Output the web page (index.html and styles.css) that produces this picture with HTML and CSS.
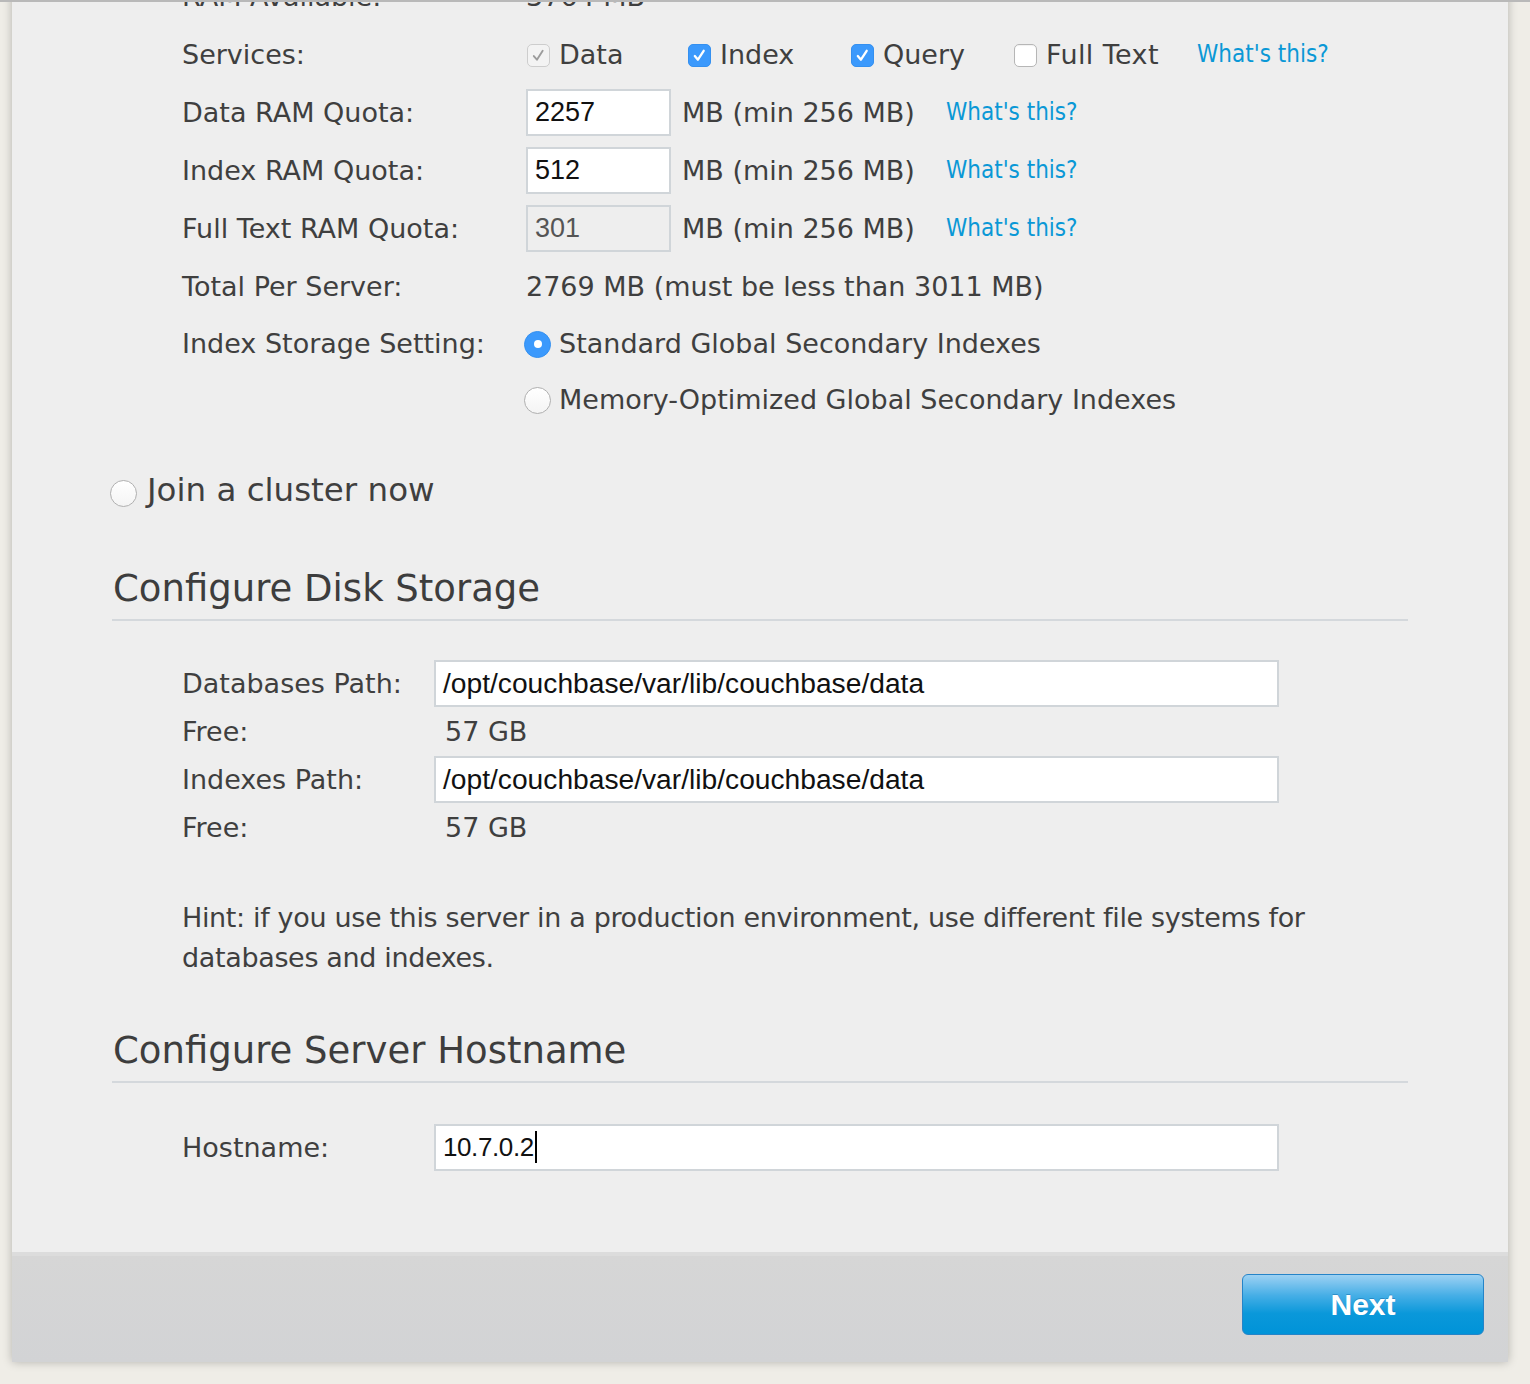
FILE: index.html
```html
<!DOCTYPE html>
<html>
<head>
<meta charset="utf-8">
<link rel="stylesheet" href="styles.css">
</head>
<body>
<div class="page">
  <div class="panel">
    <div class="content">
      <div class="setup">
        <div class="row">
          <div class="label">RAM Available:</div>
          <div class="value">3764 MB</div>
        </div>
        <div class="row">
          <div class="label">Services:</div>
          <div class="value services">
            <span class="svc svc-data"><span class="cb cb-disabled"><svg viewBox="0 0 22 22"><path d="M6.5 11.5 L9.5 15 L15 6.5" fill="none" stroke="#9c9c9c" stroke-width="1.8" stroke-linecap="round" stroke-linejoin="round"/></svg></span>Data</span>
            <span class="svc svc-index"><span class="cb cb-on"><svg viewBox="0 0 22 22"><path d="M6.5 11.5 L9.5 15 L15 6.5" fill="none" stroke="#fff" stroke-width="2.2" stroke-linecap="round" stroke-linejoin="round"/></svg></span>Index</span>
            <span class="svc svc-query"><span class="cb cb-on"><svg viewBox="0 0 22 22"><path d="M6.5 11.5 L9.5 15 L15 6.5" fill="none" stroke="#fff" stroke-width="2.2" stroke-linecap="round" stroke-linejoin="round"/></svg></span>Query</span>
            <span class="svc svc-fts"><span class="cb cb-off"></span>Full Text</span>
            <a class="help" href="#">What's this?</a>
          </div>
        </div>
        <div class="row">
          <div class="label">Data RAM Quota:</div>
          <div class="value">
            <div class="field small">2257</div>
            <span class="unit">MB (min 256 MB)</span>
            <a class="help" href="#">What's this?</a>
          </div>
        </div>
        <div class="row">
          <div class="label">Index RAM Quota:</div>
          <div class="value">
            <div class="field small">512</div>
            <span class="unit">MB (min 256 MB)</span>
            <a class="help" href="#">What's this?</a>
          </div>
        </div>
        <div class="row">
          <div class="label">Full Text RAM Quota:</div>
          <div class="value">
            <div class="field small disabled">301</div>
            <span class="unit">MB (min 256 MB)</span>
            <a class="help" href="#">What's this?</a>
          </div>
        </div>
        <div class="row">
          <div class="label">Total Per Server:</div>
          <div class="value">2769 MB (must be less than 3011 MB)</div>
        </div>
        <div class="row row-radio">
          <div class="label">Index Storage Setting:</div>
          <div class="value"><span class="radio radio-on"></span>Standard Global Secondary Indexes</div>
        </div>
        <div class="row row-radio">
          <div class="label"></div>
          <div class="value"><span class="radio"></span>Memory-Optimized Global Secondary Indexes</div>
        </div>
      </div>

      <div class="join"><span class="radio radio-lg"></span>Join a cluster now</div>

      <h2 class="section-title first">Configure Disk Storage</h2>
      <div class="disk">
        <div class="drow">
          <div class="dlabel">Databases Path:</div>
          <div class="field wide">/opt/couchbase/var/lib/couchbase/data</div>
        </div>
        <div class="drow">
          <div class="dlabel">Free:</div>
          <div class="dvalue">57 GB</div>
        </div>
        <div class="drow">
          <div class="dlabel">Indexes Path:</div>
          <div class="field wide">/opt/couchbase/var/lib/couchbase/data</div>
        </div>
        <div class="drow">
          <div class="dlabel">Free:</div>
          <div class="dvalue">57 GB</div>
        </div>
        <p class="hint">Hint: if you use this server in a production environment, use different file systems for databases and indexes.</p>
      </div>

      <h2 class="section-title second">Configure Server Hostname</h2>
      <div class="host">
        <div class="drow">
          <div class="dlabel">Hostname:</div>
          <div class="field wide hostname">10.7.0.2<span class="caret"></span></div>
        </div>
      </div>
    </div>
    <div class="footer">
      <button class="next">Next</button>
    </div>
  </div>
</div>
</body>
</html>
```
FILE: styles.css
```css
html, body {
  margin: 0;
  padding: 0;
}
body {
  background: #efede7;
  font-family: "DejaVu Sans", Verdana, sans-serif;
  color: #3f3f3f;
  overflow: hidden;
}
.page {
  border-top: 2px solid #b9b9b9;
  height: 1382px;
  overflow: hidden;
  position: relative;
}
.panel {
  margin-left: 12px;
  width: 1496px;
  margin-top: -2px;
  background: #eeeeee;
  box-shadow: 0 0 9px rgba(0,0,0,0.25);
}
.content {
  padding: 0 100px 81px 100px;
}
.setup {
  margin-top: -35px;
  padding-left: 70px;
}
.row {
  display: flex;
  align-items: center;
  height: 58px;
  font-size: 27px;
}
.row-radio {
  height: 56px;
}
.label {
  width: 344px;
  flex: none;
}
.value {
  display: flex;
  align-items: center;
  white-space: nowrap;
}
.services .svc {
  display: inline-flex;
  align-items: center;
}
.svc-data { width: 161px; }
.svc-index { width: 163px; }
.svc-query { width: 163px; }
.svc-fts { width: 184px; }
.svc-fts { letter-spacing: 0.4px; }
.cb {
  width: 23px;
  height: 23px;
  box-sizing: border-box;
  border-radius: 5px;
  margin-left: 1px;
  margin-right: 9px;
  display: inline-block;
  position: relative;
  top: 1px;
}
.cb svg { width: 23px; height: 23px; display: block; }
.cb-disabled {
  background: #f3f3f3;
  border: 1px solid #cdcdcd;
}
.cb-disabled svg { margin: -1px; }
.cb-on {
  background: #3b99fc;
  border: 1px solid #3490f0;
}
.cb-on svg { margin: -1px; }
.cb-off {
  background: #ffffff;
  border: 1px solid #b6b6b6;
  box-shadow: inset 0 1px 1px rgba(0,0,0,0.06);
}
.help {
  font-family: "DejaVu Sans Condensed", "DejaVu Sans", sans-serif;
  font-size: 24px;
  color: #0a98d6;
  text-decoration: none;
}
.field {
  box-sizing: border-box;
  height: 47px;
  background: #ffffff;
  border: 2px solid #d0d5d9;
  font-family: "Liberation Sans", Arial, sans-serif;
  color: #111;
  display: flex;
  align-items: center;
}
.field.small {
  width: 145px;
  padding-left: 7px;
  font-size: 27px;
  margin-right: 11px;
}
.field.disabled {
  background: #eeeeee;
  color: #555;
}
.unit {
  margin-right: 31px;
}
.radio {
  display: inline-block;
  box-sizing: border-box;
  width: 27px;
  height: 27px;
  border-radius: 50%;
  background: linear-gradient(#ffffff, #f4f4f4);
  border: 1px solid #b0b0b0;
  margin-left: -2px;
  margin-right: 8px;
  position: relative;
  top: 1px;
}
.radio-on {
  background: #3b99fc;
  border: 1px solid #3490f0;
}
.radio-on::after {
  content: "";
  position: absolute;
  left: 50%;
  top: 50%;
  width: 8px;
  height: 8px;
  margin: -4px 0 0 -4px;
  border-radius: 50%;
  background: #ffffff;
}
.join {
  margin-top: 38px;
  height: 50px;
  display: flex;
  align-items: center;
  font-size: 32.5px;
}
.radio-lg {
  margin-left: -2px;
  margin-right: 10px;
  top: 3px;
}
.section-title {
  margin: 0;
  font-weight: normal;
  font-size: 37px;
  line-height: 44px;
  height: 44px;
  padding-bottom: 8px;
  border-bottom: 2px solid #d4d8dc;
  padding-left: 1px;
  color: #3d3d3d;
}
.section-title.first { margin-top: 52px; }
.section-title.second { margin-top: 51px; }
.disk {
  padding-top: 38px;
  padding-left: 70px;
}
.drow {
  display: flex;
  align-items: center;
  height: 48px;
  font-size: 27px;
}
.dlabel {
  width: 252px;
  flex: none;
}
.dvalue {
  padding-left: 11px;
}
.field.wide {
  width: 845px;
  height: 47px;
  padding-left: 7px;
  font-size: 28.2px;
}
.field.hostname {
  font-size: 26px;
  letter-spacing: -0.4px;
}
.caret {
  display: inline-block;
  width: 2px;
  height: 32px;
  background: #000;
  margin-left: 1px;
}
.hint {
  margin: 47px 0 0 0;
  font-size: 27px;
  line-height: 40px;
  letter-spacing: -0.35px;
  width: 1160px;
}
.host {
  padding-top: 40px;
  padding-left: 70px;
}
.footer {
  height: 110px;
  box-sizing: border-box;
  background: linear-gradient(#d6d6d6, #d2d3d5);
  border-top: 4px solid #dcdcdc;
  display: flex;
  justify-content: flex-end;
  padding: 18px 24px 0 0;
}
.next {
  width: 242px;
  height: 61px;
  border-radius: 6px;
  border: 1px solid #2584c8;
  background: linear-gradient(#9dd1f3 0%, #45aee6 35%, #0a98da 65%, #0093d8 100%);
  color: #ffffff;
  font-family: "Liberation Sans", Arial, sans-serif;
  font-weight: bold;
  font-size: 30px;
  text-shadow: 0 -1px 0 rgba(0,80,140,0.35);
  cursor: pointer;
}
```
